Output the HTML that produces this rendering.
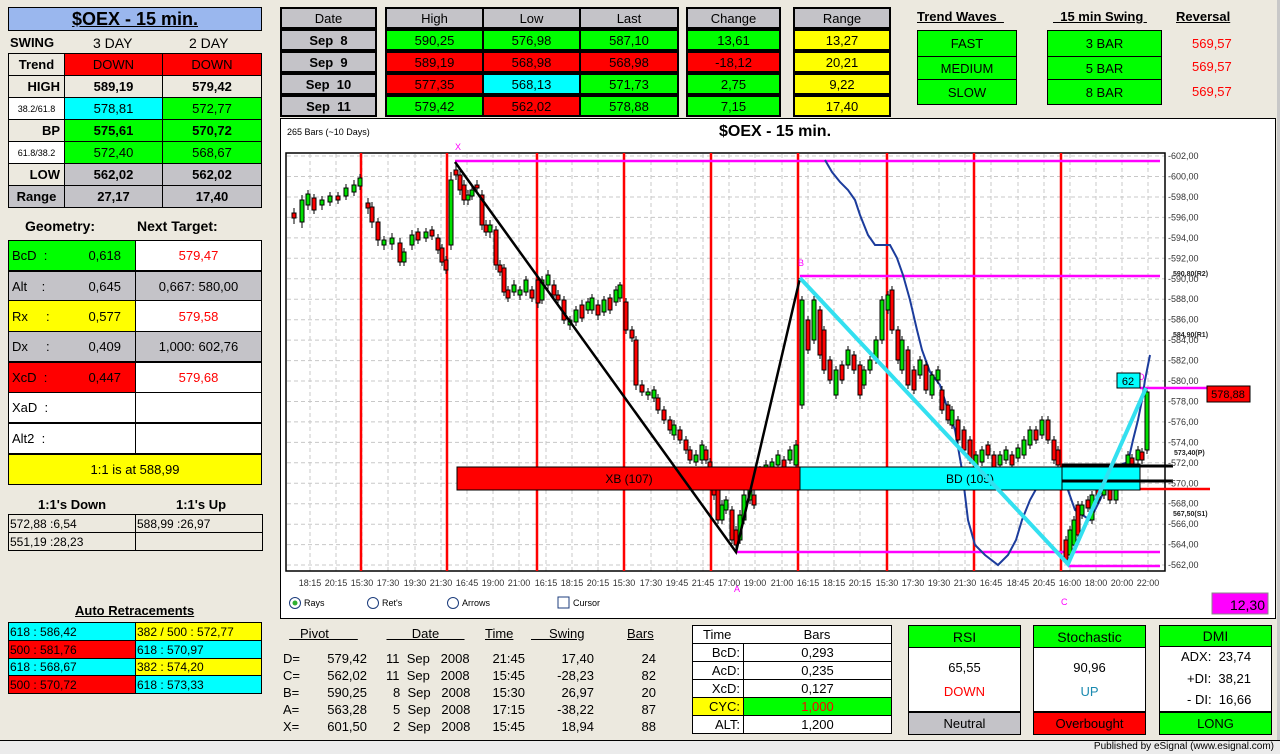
<!DOCTYPE html>
<html><head><meta charset="utf-8">
<style>
*{margin:0;padding:0;box-sizing:border-box}
body{width:1280px;height:754px;background:#ece9df;font-family:"Liberation Sans",Arial,sans-serif;position:relative;overflow:hidden;color:#000}
.a{position:absolute}
.c{position:absolute;display:flex;align-items:center;justify-content:center;border:1px solid #000;font-size:13px;font-weight:bold;white-space:nowrap}
.t{position:absolute;font-size:13px;font-weight:bold;white-space:nowrap}
.k{border:2px solid #000}
.g{background:#00ff00}.r{background:#ff0000}.y{background:#ffff00}.q{background:#00ffff}.s{background:#c4c3c8}.w{background:#fff}.e{background:#ece9df}
.rt{color:#ff0000}
.u{text-decoration:underline}
.n{font-weight:normal}
</style></head><body>

<!-- left title -->
<div class="c u" style="left:8px;top:7px;width:254px;height:24px;background:#9ab7ee;font-size:18px;border-width:1px">$OEX - 15 min.</div>
<div class="t" style="left:10px;top:35px">SWING</div>
<div class="t n" style="left:93px;top:35px;font-size:14px">3 DAY</div>
<div class="t n" style="left:189px;top:35px;font-size:14px">2 DAY</div>
<div class="a" style="left:8px;top:53px;width:254px;height:155px;border:1px solid #000"></div>
<div class="c e" style="left:8px;top:53px;width:57px;height:23px">Trend</div>
<div class="c r n" style="left:64px;top:53px;width:99px;height:23px">DOWN</div>
<div class="c r n" style="left:162px;top:53px;width:100px;height:23px">DOWN</div>
<div class="c e" style="left:8px;top:75px;width:57px;height:23px;justify-content:flex-end;padding-right:4px">HIGH</div>
<div class="c e" style="left:64px;top:75px;width:99px;height:23px">589,19</div>
<div class="c e" style="left:162px;top:75px;width:100px;height:23px">579,42</div>
<div class="c w n" style="left:8px;top:97px;width:57px;height:23px;font-size:9px">38.2/61.8</div>
<div class="c q n" style="left:64px;top:97px;width:99px;height:23px">578,81</div>
<div class="c g n" style="left:162px;top:97px;width:100px;height:23px">572,77</div>
<div class="c e" style="left:8px;top:119px;width:57px;height:23px;justify-content:flex-end;padding-right:4px">BP</div>
<div class="c g" style="left:64px;top:119px;width:99px;height:23px">575,61</div>
<div class="c g" style="left:162px;top:119px;width:100px;height:23px">570,72</div>
<div class="c w n" style="left:8px;top:141px;width:57px;height:23px;font-size:9px">61.8/38.2</div>
<div class="c g n" style="left:64px;top:141px;width:99px;height:23px">572,40</div>
<div class="c g n" style="left:162px;top:141px;width:100px;height:23px">568,67</div>
<div class="c e" style="left:8px;top:163px;width:57px;height:23px;justify-content:flex-end;padding-right:4px">LOW</div>
<div class="c s" style="left:64px;top:163px;width:99px;height:23px">562,02</div>
<div class="c s" style="left:162px;top:163px;width:100px;height:23px">562,02</div>
<div class="c s" style="left:8px;top:185px;width:57px;height:23px">Range</div>
<div class="c s" style="left:64px;top:185px;width:99px;height:23px">27,17</div>
<div class="c s" style="left:162px;top:185px;width:100px;height:23px">17,40</div>

<!-- Geometry -->
<div class="t" style="left:25px;top:218px;font-size:14px">Geometry:</div>
<div class="t" style="left:137px;top:218px;font-size:14px">Next Target:</div>
<div class="a" style="left:8px;top:240px;width:254px;height:245px;border:1px solid #000;background:#fff"></div>
<div class="c g n" style="left:8px;top:240px;width:128px;height:31px;justify-content:space-between;padding:0 14px 0 3px"><span>BcD&nbsp;&nbsp;:</span><span>0,618</span></div>
<div class="c w rt n" style="left:135px;top:240px;width:127px;height:31px">579,47</div>
<div class="c s n" style="left:8px;top:270px;width:128px;height:31px;justify-content:space-between;padding:0 14px 0 3px;border-top-width:2px"><span>Alt&nbsp;&nbsp;&nbsp;&nbsp;:</span><span>0,645</span></div>
<div class="c s n" style="left:135px;top:270px;width:127px;height:31px;border-top-width:2px">0,667: 580,00</div>
<div class="c y n" style="left:8px;top:300px;width:128px;height:32px;justify-content:space-between;padding:0 14px 0 3px"><span>Rx&nbsp;&nbsp;&nbsp;&nbsp;&nbsp;:</span><span>0,577</span></div>
<div class="c w rt n" style="left:135px;top:300px;width:127px;height:32px">579,58</div>
<div class="c s n" style="left:8px;top:331px;width:128px;height:31px;justify-content:space-between;padding:0 14px 0 3px"><span>Dx&nbsp;&nbsp;&nbsp;&nbsp;&nbsp;:</span><span>0,409</span></div>
<div class="c s n" style="left:135px;top:331px;width:127px;height:31px">1,000: 602,76</div>
<div class="c r n" style="left:8px;top:361px;width:128px;height:32px;justify-content:space-between;padding:0 14px 0 3px;border-top-width:2px"><span>XcD&nbsp;&nbsp;:</span><span>0,447</span></div>
<div class="c w rt n" style="left:135px;top:361px;width:127px;height:32px;border-top-width:2px">579,68</div>
<div class="c w n" style="left:8px;top:392px;width:128px;height:31px;justify-content:flex-start;padding-left:3px">XaD&nbsp;&nbsp;:</div>
<div class="c w" style="left:135px;top:392px;width:127px;height:31px"></div>
<div class="c w n" style="left:8px;top:422px;width:128px;height:32px;justify-content:flex-start;padding-left:3px;border-top-width:2px">Alt2&nbsp;&nbsp;:</div>
<div class="c w" style="left:135px;top:422px;width:127px;height:32px;border-top-width:2px"></div>
<div class="c y n" style="left:8px;top:453px;width:254px;height:32px;border-top-width:2px">1:1 is at 588,99</div>

<div class="t" style="left:38px;top:497px">1:1's Down</div>
<div class="t" style="left:176px;top:497px">1:1's Up</div>
<div class="c n e" style="left:8px;top:514px;width:128px;height:19px;justify-content:flex-start;padding-left:1px;font-size:12px">572,88 :6,54</div>
<div class="c n e" style="left:135px;top:514px;width:128px;height:19px;justify-content:flex-start;padding-left:1px;font-size:12px">588,99 :26,97</div>
<div class="c n e" style="left:8px;top:532px;width:128px;height:19px;justify-content:flex-start;padding-left:1px;font-size:12px">551,19 :28,23</div>
<div class="c n e" style="left:135px;top:532px;width:128px;height:19px"></div>

<!-- Auto retracements -->
<div class="t u" style="left:75px;top:603px">Auto Retracements</div>
<div class="c q n" style="left:8px;top:622px;width:128px;height:19px;justify-content:flex-start;padding-left:1px;font-size:12px">618 : 586,42</div>
<div class="c y n" style="left:135px;top:622px;width:127px;height:19px;justify-content:flex-start;padding-left:1px;font-size:12px">382 / 500 : 572,77</div>
<div class="c r n" style="left:8px;top:640px;width:128px;height:19px;justify-content:flex-start;padding-left:1px;font-size:12px">500 : 581,76</div>
<div class="c q n" style="left:135px;top:640px;width:127px;height:19px;justify-content:flex-start;padding-left:1px;font-size:12px">618 : 570,97</div>
<div class="c q n" style="left:8px;top:658px;width:128px;height:18px;justify-content:flex-start;padding-left:1px;font-size:12px">618 : 568,67</div>
<div class="c y n" style="left:135px;top:658px;width:127px;height:18px;justify-content:flex-start;padding-left:1px;font-size:12px">382 : 574,20</div>
<div class="c r n" style="left:8px;top:675px;width:128px;height:19px;justify-content:flex-start;padding-left:1px;font-size:12px">500 : 570,72</div>
<div class="c q n" style="left:135px;top:675px;width:127px;height:19px;justify-content:flex-start;padding-left:1px;font-size:12px">618 : 573,33</div>

<!-- top middle tables -->
<div class="c s k n" style="left:280px;top:7px;width:97px;height:22px">Date</div>
<div class="c s k" style="left:280px;top:29px;width:97px;height:22px">Sep&nbsp;&nbsp;8</div>
<div class="c s k" style="left:280px;top:51px;width:97px;height:22px">Sep&nbsp;&nbsp;9</div>
<div class="c s k" style="left:280px;top:73px;width:97px;height:22px">Sep&nbsp;&nbsp;10</div>
<div class="c s k" style="left:280px;top:95px;width:97px;height:22px">Sep&nbsp;&nbsp;11</div>

<div class="c s k n" style="left:385px;top:7px;width:99px;height:22px">High</div>
<div class="c s k n" style="left:482px;top:7px;width:99px;height:22px">Low</div>
<div class="c s k n" style="left:579px;top:7px;width:100px;height:22px">Last</div>
<div class="c g k n" style="left:385px;top:29px;width:99px;height:22px">590,25</div>
<div class="c g k n" style="left:482px;top:29px;width:99px;height:22px">576,98</div>
<div class="c g k n" style="left:579px;top:29px;width:100px;height:22px">587,10</div>
<div class="c r k n" style="left:385px;top:51px;width:99px;height:22px">589,19</div>
<div class="c r k n" style="left:482px;top:51px;width:99px;height:22px">568,98</div>
<div class="c r k n" style="left:579px;top:51px;width:100px;height:22px">568,98</div>
<div class="c r k n" style="left:385px;top:73px;width:99px;height:22px">577,35</div>
<div class="c q k n" style="left:482px;top:73px;width:99px;height:22px">568,13</div>
<div class="c g k n" style="left:579px;top:73px;width:100px;height:22px">571,73</div>
<div class="c g k n" style="left:385px;top:95px;width:99px;height:22px">579,42</div>
<div class="c r k n" style="left:482px;top:95px;width:99px;height:22px">562,02</div>
<div class="c g k n" style="left:579px;top:95px;width:100px;height:22px">578,88</div>

<div class="c s k n" style="left:686px;top:7px;width:95px;height:22px">Change</div>
<div class="c g k n" style="left:686px;top:29px;width:95px;height:22px">13,61</div>
<div class="c r k n" style="left:686px;top:51px;width:95px;height:22px">-18,12</div>
<div class="c g k n" style="left:686px;top:73px;width:95px;height:22px">2,75</div>
<div class="c g k n" style="left:686px;top:95px;width:95px;height:22px">7,15</div>

<div class="c s k n" style="left:793px;top:7px;width:98px;height:22px">Range</div>
<div class="c y k n" style="left:793px;top:29px;width:98px;height:22px">13,27</div>
<div class="c y k n" style="left:793px;top:51px;width:98px;height:22px">20,21</div>
<div class="c y k n" style="left:793px;top:73px;width:98px;height:22px">9,22</div>
<div class="c y k n" style="left:793px;top:95px;width:98px;height:22px">17,40</div>

<!-- trend waves -->
<div class="t u" style="left:917px;top:9px">Trend Waves&nbsp;&nbsp;</div>
<div class="t u" style="left:1053px;top:9px">&nbsp;&nbsp;15 min Swing&nbsp;</div>
<div class="t u" style="left:1176px;top:9px">Reversal</div>
<div class="c g n" style="left:917px;top:30px;width:100px;height:27px">FAST</div>
<div class="c g n" style="left:917px;top:56px;width:100px;height:24px">MEDIUM</div>
<div class="c g n" style="left:917px;top:79px;width:100px;height:26px">SLOW</div>
<div class="c g n" style="left:1047px;top:30px;width:115px;height:27px">3 BAR</div>
<div class="c g n" style="left:1047px;top:56px;width:115px;height:24px">5 BAR</div>
<div class="c g n" style="left:1047px;top:79px;width:115px;height:26px">8 BAR</div>
<div class="t n rt" style="left:1192px;top:36px">569,57</div>
<div class="t n rt" style="left:1192px;top:59px">569,57</div>
<div class="t n rt" style="left:1192px;top:84px">569,57</div>

<!-- chart panel -->
<div class="a" style="left:280px;top:118px;width:996px;height:501px;background:#fff;border:1px solid #000"></div>
<svg class="a" style="left:0;top:0" width="1280" height="754" viewBox="0 0 1280 754" font-family="Liberation Sans, Arial, sans-serif">
<g stroke="#c8c8c8" stroke-dasharray="4,3" stroke-width="1">
<path d="M287 156H1165M287 176.5H1165M287 197H1165M287 217.4H1165M287 237.9H1165M287 258.3H1165M287 278.8H1165M287 299.2H1165M287 319.7H1165M287 340.1H1165M287 360.6H1165M287 381H1165M287 401.5H1165M287 421.9H1165M287 442.4H1165M287 462.8H1165M287 483.3H1165M287 503.7H1165M287 524.2H1165M287 544.6H1165M287 565H1165"/>
<path d="M310 154V571M336 154V571M362 154V571M388 154V571M415 154V571M441 154V571M467 154V571M493 154V571M519 154V571M546 154V571M572 154V571M598 154V571M624 154V571M651 154V571M677 154V571M703 154V571M729 154V571M755 154V571M782 154V571M808 154V571M834 154V571M860 154V571M887 154V571M913 154V571M939 154V571M965 154V571M991 154V571M1018 154V571M1044 154V571M1070 154V571M1096 154V571M1122 154V571M1148 154V571"/>
</g>
<path d="M286 153H1165V571H286Z" fill="none" stroke="#000" stroke-width="1.5"/>
<g stroke="#ff0000" stroke-width="2.5"><path d="M361 153V571M447 153V571M537 153V571M624 153V571M711 153V571M798 153V571M887 153V571M974 153V571M1061 153V571"/></g>
<g stroke="#ff00ff" stroke-width="2.5"><path d="M455 161H1160M800 276H1160M736 552H1160M1068 566H1160M1140 388H1210"/></g>
<path d="M1140 489H1210" stroke="#ff0000" stroke-width="2.5"/>
<!-- blue indicator -->
<polyline fill="none" stroke="#1c3c9c" stroke-width="2" points="825,160 832,172 840,182 848,190 855,200 860,215 868,235 875,245 890,245 897,258 903,275 910,300 917,330 922,350 930,372 940,385 948,410 955,430 962,470 968,520 975,545 985,555 998,565 1008,555 1016,540 1022,520 1030,500 1040,482 1055,470 1062,478 1068,490 1075,510 1090,520 1100,500 1110,478 1120,465 1128,462 1133,440 1138,420 1142,400 1145,380 1148,365 1150,355"/>
<!-- candles -->
<g stroke="#000" stroke-width="1">
<path d="M294 208V224M302 195V228M308 190V210M314 194V214M322 196V210M330 192V206M338 192V204M346 184V200M354 180V196M360 174V190M368 198V214M372 202V228M378 218V246M384 236V250M392 233V250M400 238V266M404 248V266M412 230V250M418 228V244M426 228V242M432 226V240M438 234V254M442 244V266M446 256V274M451 172V250M456 165V180M460 170V195M464 180V205M468 190V205M472 186V200M477 180V194M482 190V230M486 220V236M490 220V238M496 226V270M500 260V276M504 264V296M508 286V302M514 280V296M520 286V300M526 276V296M532 286V302M538 276V308M542 276V304M548 270V290M554 280V300M558 290V304M564 296V324M570 316V330M576 306V326M582 300V322M588 298V314M592 294V314M598 300V320M604 296V316M610 294V314M616 286V306M620 282V302M626 298V334M632 326V342M636 336V390M642 380V396M648 388V400M654 386V402M658 394V414M664 406V424M670 416V434M674 420V440M680 426V444M686 436V454M690 446V464M696 450V466M702 440V464M706 446V464M710 458V482M714 474V500M718 486V524M722 500V524M726 496V514M732 506V544M736 526V550M740 510V544M744 490V524M750 486V504M754 490V509M760 466V484M766 460V479M772 458V474M778 450V469M784 456V472M790 446V464M796 440V469M802 296V409M808 316V354M814 296V344M820 306V359M824 326V374M830 356V384M836 366V399M842 361V384M848 346V369M854 351V374M860 361V399M864 366V389M870 356V374M876 336V364M882 296V344M888 291V314M892 286V334M898 326V364M902 336V374M908 346V389M914 366V394M920 356V379M926 361V394M932 371V399M938 366V384M942 386V414M948 401V424M952 406V429M958 416V444M964 426V454M970 436V464M976 451V474M982 446V466M988 441V459M994 451V474M1000 451V469M1006 446V464M1012 451V469M1018 444V462M1024 436V459M1030 426V449M1036 426V444M1042 416V439M1048 416V444M1054 436V464M1058 446V469M1066 536V564M1070 526V559M1074 516V549M1078 501V539M1082 501V519M1088 496V512M1092 491V524M1098 484V504M1104 481V499M1110 474V504M1116 476V504M1122 468V489M1128 451V479M1132 454V469M1138 446V464M1142 448V464M1147 388V454"/>
</g>
<g stroke="#000" stroke-width="1" fill="#ff0000">
<rect x="292" y="213" width="4" height="5"/><rect x="312" y="198" width="4" height="12"/><rect x="336" y="196" width="4" height="4"/>
<rect x="366" y="203" width="4" height="5"/><rect x="370" y="207" width="4" height="15"/><rect x="376" y="222" width="4" height="18"/><rect x="398" y="243" width="4" height="19"/><rect x="416" y="232" width="4" height="8"/><rect x="430" y="230" width="4" height="6"/><rect x="436" y="238" width="4" height="12"/><rect x="440" y="248" width="4" height="14"/><rect x="444" y="260" width="4" height="10"/>
<rect x="454" y="170" width="4" height="5"/><rect x="458" y="175" width="4" height="15"/><rect x="462" y="185" width="4" height="15"/><rect x="475" y="185" width="4" height="3"/><rect x="480" y="195" width="4" height="30"/><rect x="484" y="225" width="4" height="7"/><rect x="494" y="230" width="4" height="35"/><rect x="498" y="265" width="4" height="7"/><rect x="502" y="268" width="4" height="24"/><rect x="506" y="290" width="4" height="8"/><rect x="530" y="290" width="4" height="8"/><rect x="536" y="280" width="4" height="23"/><rect x="552" y="285" width="4" height="10"/><rect x="556" y="295" width="4" height="5"/><rect x="562" y="300" width="4" height="20"/><rect x="580" y="305" width="4" height="13"/><rect x="596" y="305" width="4" height="10"/><rect x="608" y="298" width="4" height="12"/><rect x="624" y="302" width="4" height="28"/><rect x="630" y="330" width="4" height="8"/><rect x="634" y="340" width="4" height="45"/><rect x="640" y="385" width="4" height="7"/><rect x="656" y="398" width="4" height="12"/><rect x="662" y="410" width="4" height="10"/><rect x="668" y="420" width="4" height="10"/><rect x="678" y="430" width="4" height="10"/><rect x="684" y="440" width="4" height="10"/><rect x="688" y="450" width="4" height="10"/><rect x="704" y="450" width="4" height="10"/><rect x="708" y="462" width="4" height="16"/><rect x="712" y="478" width="4" height="17"/><rect x="716" y="490" width="4" height="30"/><rect x="730" y="510" width="4" height="30"/><rect x="734" y="530" width="4" height="15"/><rect x="752" y="495" width="4" height="10"/><rect x="782" y="460" width="4" height="8"/>
<rect x="806" y="320" width="4" height="30"/><rect x="818" y="310" width="4" height="45"/><rect x="822" y="330" width="4" height="40"/><rect x="828" y="360" width="4" height="20"/><rect x="840" y="365" width="4" height="15"/><rect x="852" y="355" width="4" height="15"/><rect x="858" y="365" width="4" height="30"/><rect x="890" y="290" width="4" height="40"/><rect x="896" y="330" width="4" height="30"/><rect x="906" y="350" width="4" height="35"/><rect x="912" y="370" width="4" height="20"/><rect x="924" y="365" width="4" height="25"/><rect x="940" y="390" width="4" height="20"/><rect x="946" y="405" width="4" height="15"/><rect x="956" y="420" width="4" height="20"/><rect x="962" y="430" width="4" height="20"/><rect x="968" y="440" width="4" height="20"/><rect x="986" y="445" width="4" height="10"/><rect x="992" y="455" width="4" height="15"/><rect x="1010" y="455" width="4" height="10"/><rect x="1034" y="430" width="4" height="10"/><rect x="1046" y="420" width="4" height="20"/><rect x="1052" y="440" width="4" height="20"/><rect x="1056" y="450" width="4" height="15"/>
<rect x="1064" y="540" width="4" height="20"/><rect x="1076" y="505" width="4" height="30"/><rect x="1086" y="500" width="4" height="8"/><rect x="1096" y="488" width="4" height="12"/><rect x="1108" y="478" width="4" height="22"/><rect x="1130" y="458" width="4" height="7"/><rect x="1140" y="452" width="4" height="8"/>
</g>
<g stroke="#000" stroke-width="1" fill="#00e000">
<rect x="300" y="200" width="4" height="22"/><rect x="306" y="194" width="4" height="11"/><rect x="320" y="200" width="4" height="5"/><rect x="328" y="196" width="4" height="6"/><rect x="344" y="188" width="4" height="8"/><rect x="352" y="185" width="4" height="7"/><rect x="358" y="178" width="4" height="8"/>
<rect x="382" y="240" width="4" height="5"/><rect x="390" y="238" width="4" height="6"/><rect x="402" y="252" width="4" height="10"/><rect x="410" y="235" width="4" height="10"/><rect x="424" y="232" width="4" height="6"/>
<rect x="449" y="180" width="4" height="65"/><rect x="466" y="195" width="4" height="5"/><rect x="470" y="190" width="4" height="6"/><rect x="488" y="225" width="4" height="7"/><rect x="512" y="285" width="4" height="7"/><rect x="518" y="290" width="4" height="5"/><rect x="524" y="280" width="4" height="12"/><rect x="540" y="280" width="4" height="20"/><rect x="546" y="275" width="4" height="10"/><rect x="568" y="320" width="4" height="5"/><rect x="574" y="310" width="4" height="12"/><rect x="586" y="302" width="4" height="8"/><rect x="590" y="298" width="4" height="12"/><rect x="602" y="300" width="4" height="12"/><rect x="614" y="290" width="4" height="12"/><rect x="618" y="285" width="4" height="13"/><rect x="646" y="392" width="4" height="3"/><rect x="652" y="390" width="4" height="8"/><rect x="672" y="425" width="4" height="10"/><rect x="694" y="455" width="4" height="7"/><rect x="700" y="445" width="4" height="15"/><rect x="720" y="505" width="4" height="15"/><rect x="724" y="500" width="4" height="10"/><rect x="738" y="515" width="4" height="25"/><rect x="742" y="495" width="4" height="25"/><rect x="748" y="490" width="4" height="10"/><rect x="758" y="470" width="4" height="10"/><rect x="764" y="465" width="4" height="10"/><rect x="770" y="462" width="4" height="8"/><rect x="776" y="455" width="4" height="10"/><rect x="788" y="450" width="4" height="10"/><rect x="794" y="445" width="4" height="20"/>
<rect x="800" y="300" width="4" height="105"/><rect x="812" y="300" width="4" height="40"/><rect x="834" y="370" width="4" height="25"/><rect x="846" y="350" width="4" height="15"/><rect x="862" y="370" width="4" height="15"/><rect x="868" y="360" width="4" height="10"/><rect x="874" y="340" width="4" height="20"/><rect x="880" y="300" width="4" height="40"/><rect x="886" y="295" width="4" height="15"/><rect x="900" y="340" width="4" height="30"/><rect x="918" y="360" width="4" height="15"/><rect x="930" y="375" width="4" height="20"/><rect x="936" y="370" width="4" height="10"/><rect x="950" y="410" width="4" height="15"/><rect x="974" y="455" width="4" height="15"/><rect x="980" y="450" width="4" height="12"/><rect x="998" y="455" width="4" height="10"/><rect x="1004" y="450" width="4" height="10"/><rect x="1016" y="448" width="4" height="10"/><rect x="1022" y="440" width="4" height="15"/><rect x="1028" y="430" width="4" height="15"/><rect x="1040" y="420" width="4" height="15"/>
<rect x="1068" y="530" width="4" height="25"/><rect x="1072" y="520" width="4" height="25"/><rect x="1080" y="505" width="4" height="10"/><rect x="1090" y="495" width="4" height="25"/><rect x="1102" y="485" width="4" height="10"/><rect x="1114" y="480" width="4" height="20"/><rect x="1120" y="472" width="4" height="13"/><rect x="1126" y="455" width="4" height="20"/><rect x="1136" y="450" width="4" height="10"/><rect x="1145" y="392" width="4" height="58"/>
</g>
<!-- boxes -->
<rect x="457" y="467" width="343" height="23" fill="#ff0000" stroke="#000"/>
<rect x="800" y="467" width="262" height="23" fill="#00ffff" stroke="#000"/>
<rect x="1062" y="464" width="78" height="26" fill="#00ffff" stroke="#000"/>
<text x="629" y="483" font-size="12" text-anchor="middle">XB (107)</text>
<text x="970" y="483" font-size="12" text-anchor="middle">BD (105)</text>
<path d="M1062 466H1173M1062 481H1173" stroke="#000" stroke-width="3"/>
<!-- XABCD lines -->
<polyline fill="none" stroke="#000" stroke-width="2.5" points="455,162 736,552 800,278"/>
<polyline fill="none" stroke="#33e0f0" stroke-width="4" points="800,278 1068,564 1146,388"/>
<text x="455" y="150" font-size="9" fill="#ff00ff">X</text>
<text x="734" y="592" font-size="9" fill="#ff00ff">A</text>
<text x="798" y="266" font-size="9" fill="#ff00ff">B</text>
<text x="1061" y="605" font-size="9" fill="#ff00ff">C</text>
<text x="1138" y="380" font-size="9" fill="#ff00ff">D</text>
<rect x="1117" y="373" width="23" height="15" fill="#00ffff" stroke="#000"/>
<text x="1128" y="385" font-size="11" text-anchor="middle">62</text>
<rect x="1207" y="386" width="43" height="16" fill="#ff0000" stroke="#000"/>
<text x="1228" y="398" font-size="11" text-anchor="middle">578,88</text>
<g font-size="7" font-weight="bold" fill="#222">
<text x="1173" y="276">590,80(R2)</text><text x="1173" y="337">584,90(R1)</text><text x="1174" y="455">573,40(P)</text><text x="1173" y="516">567,50(S1)</text>
</g>
<g font-size="9" fill="#333">
<text x="1168" y="159">-602,00</text><text x="1168" y="179.5">-600,00</text><text x="1168" y="200">-598,00</text><text x="1168" y="220.4">-596,00</text><text x="1168" y="240.9">-594,00</text><text x="1168" y="261.3">-592,00</text><text x="1168" y="281.8">-590,00</text><text x="1168" y="302.2">-588,00</text><text x="1168" y="322.7">-586,00</text><text x="1168" y="343.1">-584,00</text><text x="1168" y="363.6">-582,00</text><text x="1168" y="384">-580,00</text><text x="1168" y="404.5">-578,00</text><text x="1168" y="424.9">-576,00</text><text x="1168" y="445.4">-574,00</text><text x="1168" y="465.8">-572,00</text><text x="1168" y="486.3">-570,00</text><text x="1168" y="506.7">-568,00</text><text x="1168" y="527.2">-566,00</text><text x="1168" y="547.6">-564,00</text><text x="1168" y="568">-562,00</text>
</g>
<g font-size="9" fill="#333" text-anchor="middle">
<text x="310" y="586">18:15</text><text x="336" y="586">20:15</text><text x="362" y="586">15:30</text><text x="388" y="586">17:30</text><text x="415" y="586">19:30</text><text x="441" y="586">21:30</text><text x="467" y="586">16:45</text><text x="493" y="586">19:00</text><text x="519" y="586">21:00</text><text x="546" y="586">16:15</text><text x="572" y="586">18:15</text><text x="598" y="586">20:15</text><text x="624" y="586">15:30</text><text x="651" y="586">17:30</text><text x="677" y="586">19:45</text><text x="703" y="586">21:45</text><text x="729" y="586">17:00</text><text x="755" y="586">19:00</text><text x="782" y="586">21:00</text><text x="808" y="586">16:15</text><text x="834" y="586">18:15</text><text x="860" y="586">20:15</text><text x="887" y="586">15:30</text><text x="913" y="586">17:30</text><text x="939" y="586">19:30</text><text x="965" y="586">21:30</text><text x="991" y="586">16:45</text><text x="1018" y="586">18:45</text><text x="1044" y="586">20:45</text><text x="1070" y="586">16:00</text><text x="1096" y="586">18:00</text><text x="1122" y="586">20:00</text><text x="1148" y="586">22:00</text>
</g>
<text x="287" y="135" font-size="9">265 Bars (~10 Days)</text>
<text x="775" y="136" font-size="16" font-weight="bold" text-anchor="middle">$OEX - 15 min.</text>
<!-- radios -->
<g fill="#fff" stroke="#1c3c7c" stroke-width="1"><circle cx="295" cy="603" r="5.5"/><circle cx="373" cy="603" r="5.5"/><circle cx="453" cy="603" r="5.5"/><rect x="558" y="597" width="11" height="11"/></g>
<circle cx="295" cy="603" r="2.5" fill="#2fb02f"/>
<g font-size="9" fill="#000"><text x="304" y="606">Rays</text><text x="382" y="606">Ret's</text><text x="462" y="606">Arrows</text><text x="573" y="606">Cursor</text></g>
<rect x="1212" y="593" width="56" height="21" fill="#ff00ff" stroke="#888"/>
<text x="1265" y="610" font-size="14" text-anchor="end">12,30</text>
</svg>

<!-- pivot table -->
<div class="t n u" style="left:280px;top:626px;width:87px;text-align:center">&nbsp;&nbsp;&nbsp;Pivot&nbsp;&nbsp;&nbsp;&nbsp;&nbsp;&nbsp;&nbsp;&nbsp;</div>
<div class="t n u" style="left:380px;top:626px;width:91px;text-align:center">&nbsp;&nbsp;&nbsp;&nbsp;&nbsp;&nbsp;&nbsp;Date&nbsp;&nbsp;&nbsp;&nbsp;&nbsp;&nbsp;&nbsp;</div>
<div class="t n u" style="left:485px;top:626px">Time</div>
<div class="t n u" style="left:531px;top:626px">&nbsp;&nbsp;&nbsp;&nbsp;&nbsp;Swing</div>
<div class="t n u" style="left:627px;top:626px">Bars</div>
<div class="a" style="left:283px;top:650px;font-size:13px;line-height:17px;width:380px">
<div style="position:relative;height:17px"><span class="a" style="left:0">D=</span><span class="a" style="right:296px">579,42</span><span class="a" style="left:103px">11&nbsp;&nbsp;Sep&nbsp;&nbsp;&nbsp;2008</span><span class="a" style="right:138px">21:45</span><span class="a" style="right:69px">17,40</span><span class="a" style="right:7px">24</span></div>
<div style="position:relative;height:17px"><span class="a" style="left:0">C=</span><span class="a" style="right:296px">562,02</span><span class="a" style="left:103px">11&nbsp;&nbsp;Sep&nbsp;&nbsp;&nbsp;2008</span><span class="a" style="right:138px">15:45</span><span class="a" style="right:69px">-28,23</span><span class="a" style="right:7px">82</span></div>
<div style="position:relative;height:17px"><span class="a" style="left:0">B=</span><span class="a" style="right:296px">590,25</span><span class="a" style="left:110px">8&nbsp;&nbsp;Sep&nbsp;&nbsp;&nbsp;2008</span><span class="a" style="right:138px">15:30</span><span class="a" style="right:69px">26,97</span><span class="a" style="right:7px">20</span></div>
<div style="position:relative;height:17px"><span class="a" style="left:0">A=</span><span class="a" style="right:296px">563,28</span><span class="a" style="left:110px">5&nbsp;&nbsp;Sep&nbsp;&nbsp;&nbsp;2008</span><span class="a" style="right:138px">17:15</span><span class="a" style="right:69px">-38,22</span><span class="a" style="right:7px">87</span></div>
<div style="position:relative;height:17px"><span class="a" style="left:0">X=</span><span class="a" style="right:296px">601,50</span><span class="a" style="left:110px">2&nbsp;&nbsp;Sep&nbsp;&nbsp;&nbsp;2008</span><span class="a" style="right:138px">15:45</span><span class="a" style="right:69px">18,94</span><span class="a" style="right:7px">88</span></div>
</div>

<!-- time bars -->
<div class="a" style="left:692px;top:625px;width:200px;height:109px;background:#fff;border:1px solid #000"></div>
<div class="c w n" style="left:692px;top:625px;width:52px;height:19px;border-right:none;justify-content:flex-start;padding-left:10px">Time</div>
<div class="c w n" style="left:743px;top:625px;width:149px;height:19px;border-left:none">Bars</div>
<div class="c w n" style="left:692px;top:643px;width:52px;height:19px;justify-content:flex-end;padding-right:3px">BcD:</div>
<div class="c w n" style="left:743px;top:643px;width:149px;height:19px">0,293</div>
<div class="c w n" style="left:692px;top:661px;width:52px;height:19px;justify-content:flex-end;padding-right:3px">AcD:</div>
<div class="c w n" style="left:743px;top:661px;width:149px;height:19px">0,235</div>
<div class="c w n" style="left:692px;top:679px;width:52px;height:19px;justify-content:flex-end;padding-right:3px">XcD:</div>
<div class="c w n" style="left:743px;top:679px;width:149px;height:19px">0,127</div>
<div class="c y n" style="left:692px;top:697px;width:52px;height:19px;justify-content:flex-end;padding-right:3px">CYC:</div>
<div class="c g n rt" style="left:743px;top:697px;width:149px;height:19px">1,000</div>
<div class="c w n" style="left:692px;top:715px;width:52px;height:19px;justify-content:flex-end;padding-right:3px">ALT:</div>
<div class="c w n" style="left:743px;top:715px;width:149px;height:19px">1,200</div>

<!-- indicators -->
<div class="a" style="left:908px;top:625px;width:113px;height:110px;border:1px solid #000;background:#fff"></div>
<div class="c g n" style="left:908px;top:625px;width:113px;height:23px;font-size:14px">RSI</div>
<div class="t n" style="left:908px;top:660px;width:113px;text-align:center">65,55</div>
<div class="t n rt" style="left:908px;top:684px;width:113px;text-align:center">DOWN</div>
<div class="c s n" style="left:908px;top:711px;width:113px;height:24px;border-top-width:2px">Neutral</div>

<div class="a" style="left:1033px;top:625px;width:113px;height:110px;border:1px solid #000;background:#fff"></div>
<div class="c g n" style="left:1033px;top:625px;width:113px;height:23px;font-size:14px">Stochastic</div>
<div class="t n" style="left:1033px;top:660px;width:113px;text-align:center">90,96</div>
<div class="t n" style="left:1033px;top:684px;width:113px;text-align:center;color:#1a8ab0">UP</div>
<div class="c r n" style="left:1033px;top:711px;width:113px;height:24px;border-top-width:2px">Overbought</div>

<div class="a" style="left:1159px;top:625px;width:113px;height:110px;border:1px solid #000;background:#fff"></div>
<div class="c g n" style="left:1159px;top:625px;width:113px;height:22px;font-size:14px">DMI</div>
<div class="t n" style="left:1181px;top:649px">ADX:&nbsp;&nbsp;23,74</div>
<div class="t n" style="left:1187px;top:671px">+DI:&nbsp;&nbsp;38,21</div>
<div class="t n" style="left:1187px;top:692px">- DI:&nbsp;&nbsp;16,66</div>
<div class="c g n" style="left:1159px;top:711px;width:113px;height:24px;border-top-width:2px">LONG</div>

<!-- status bar -->
<div class="a" style="left:0;top:740px;width:1280px;height:14px;background:#ebebeb;border-top:1px solid #000"></div>
<div class="t n" style="right:6px;top:741px;font-size:10px">Published by eSignal (www.esignal.com)</div>
<div class="a" style="left:1277px;top:0;width:3px;height:740px;background:#c8c8c8"></div>
</body></html>
